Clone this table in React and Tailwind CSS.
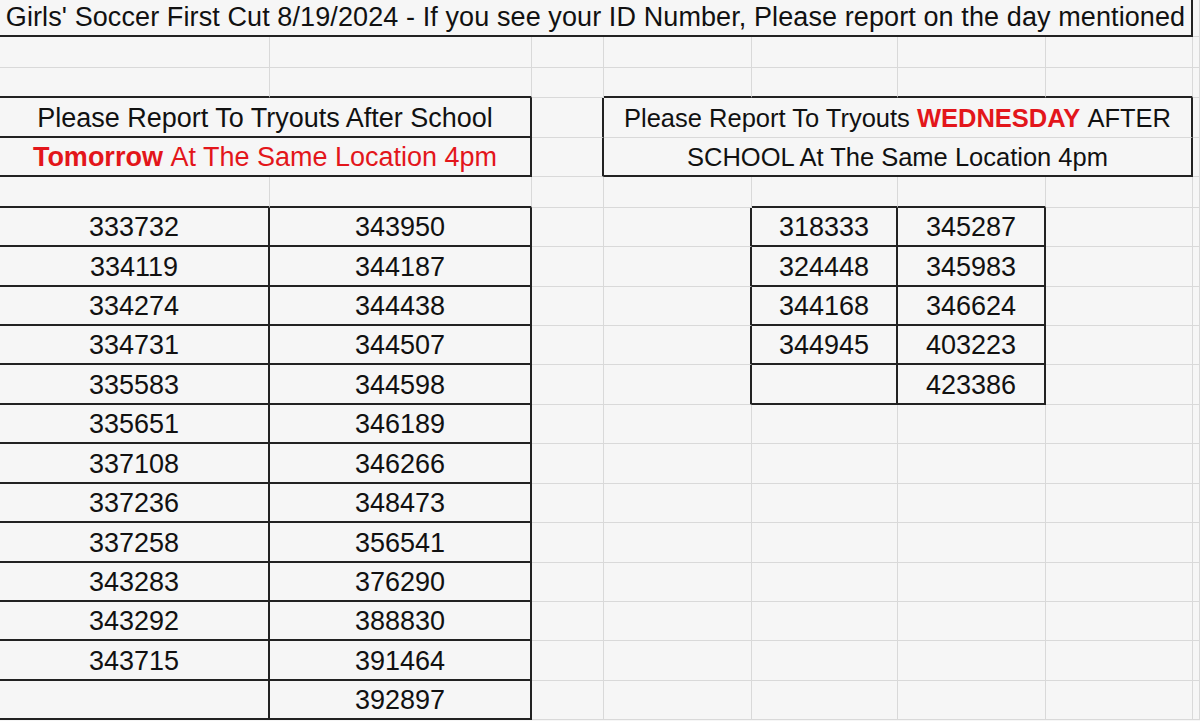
// spreadsheet screenshot: every cell draws only its right + bottom edge
const RG = 'border-r border-r-[#d9d9d9]';
const BG = 'border-b border-b-[#d9d9d9]';
const RK = 'border-r-2 border-r-[#222]';
const BK = 'border-b-2 border-b-[#222]';

const leftA = ['333732', '334119', '334274', '334731', '335583', '335651', '337108', '337236', '337258', '343283', '343292', '343715', ''];
const leftB = ['343950', '344187', '344438', '344507', '344598', '346189', '346266', '348473', '356541', '376290', '388830', '391464', '392897'];
const rightE = ['318333', '324448', '344168', '344945', ''];
const rightF = ['345287', '345983', '346624', '403223', '423386'];
const heights = ['h-[39px]', 'h-[40px]', 'h-[39px]', 'h-[39px]', 'h-[40px]', 'h-[39px]', 'h-[40px]', 'h-[39px]', 'h-[40px]', 'h-[39px]', 'h-[39px]', 'h-[40px]', 'h-[39px]'];

const Cell = ({ w, r = RG, b = BG, children, className = '' }) => (
  <div className={`${w} shrink-0 ${r} ${b} flex items-center justify-center whitespace-nowrap ${className}`}>
    {children}
  </div>
);

const EmptyRow = ({ h, bottoms = {} }) => (
  <div className={`flex ${h}`}>
    <Cell w="w-[270px]" b={bottoms.a || BG} />
    <Cell w="w-[262px]" b={bottoms.b || BG} />
    <Cell w="w-[72px]" />
    <Cell w="w-[148px]" b={bottoms.d || BG} />
    <Cell w="w-[146px]" b={bottoms.e || BG} />
    <Cell w="w-[148px]" b={bottoms.f || BG} />
    <Cell w="w-[147px]" b={bottoms.g || BG} />
    <Cell w="w-[7px]" />
  </div>
);

export default function App() {
  return (
    <div className="w-[1200px] h-[721px] overflow-hidden bg-[#f6f6f6] text-[#111] text-[27px] leading-none font-['Liberation_Sans',Arial,sans-serif]">
      {/* title */}
      <div className="flex h-[37px]">
        <Cell w="w-[1193px]" r={RK} b={BK} className="pb-[1px] tracking-[0.1px]">
          Girls' Soccer First Cut 8/19/2024 - If you see your ID Number, Please report on the day mentioned
        </Cell>
        <Cell w="w-[7px]" />
      </div>
      <EmptyRow h="h-[31px]" />
      <EmptyRow h="h-[30px]" bottoms={{ a: BK, b: BK, d: BK, e: BK, f: BK, g: BK }} />

      {/* headings */}
      <div className="flex h-[40px]">
        <Cell w="w-[532px]" r={RK} b={BK} className="pt-[2px]">Please Report To Tryouts After School</Cell>
        <Cell w="w-[72px]" r={RK} />
        <Cell w="w-[589px]" r={RK} className="text-[25.5px] pt-[2px]">
          Please Report To Tryouts&nbsp;<span className="font-bold text-[#e3161b]">WEDNESDAY</span>&nbsp;AFTER
        </Cell>
        <Cell w="w-[7px]" />
      </div>
      <div className="flex h-[39px]">
        <Cell w="w-[532px]" r={RK} b={BK} className="pt-[2px]">
          <span className="text-[#e3161b]">
            <span className="font-bold">Tomorrow</span>&nbsp;At The Same Location 4pm
          </span>
        </Cell>
        <Cell w="w-[72px]" r={RK} />
        <Cell w="w-[589px]" r={RK} b={BK} className="text-[25.5px] pt-[2px]">SCHOOL At The Same Location 4pm</Cell>
        <Cell w="w-[7px]" />
      </div>
      <EmptyRow h="h-[31px]" bottoms={{ a: BK, b: BK, e: BK, f: BK }} />

      {/* id tables */}
      {leftB.map((bId, i) => {
        const inRight = i < rightF.length;
        return (
          <div key={i} className={`flex ${heights[i]}`}>
            <Cell w="w-[270px]" r={RK} b={BK} className="pt-[2px]">{leftA[i]}</Cell>
            <Cell w="w-[262px]" r={RK} b={BK} className="pt-[2px]">{bId}</Cell>
            <Cell w="w-[72px]" />
            <Cell w="w-[148px]" r={inRight ? RK : RG} />
            <Cell w="w-[146px]" r={inRight ? RK : RG} b={inRight ? BK : BG} className="pt-[2px]">{inRight ? rightE[i] : ''}</Cell>
            <Cell w="w-[148px]" r={inRight ? RK : RG} b={inRight ? BK : BG} className="pt-[2px]">{inRight ? rightF[i] : ''}</Cell>
            <Cell w="w-[147px]" />
            <Cell w="w-[7px]" />
          </div>
        );
      })}
    </div>
  );
}
